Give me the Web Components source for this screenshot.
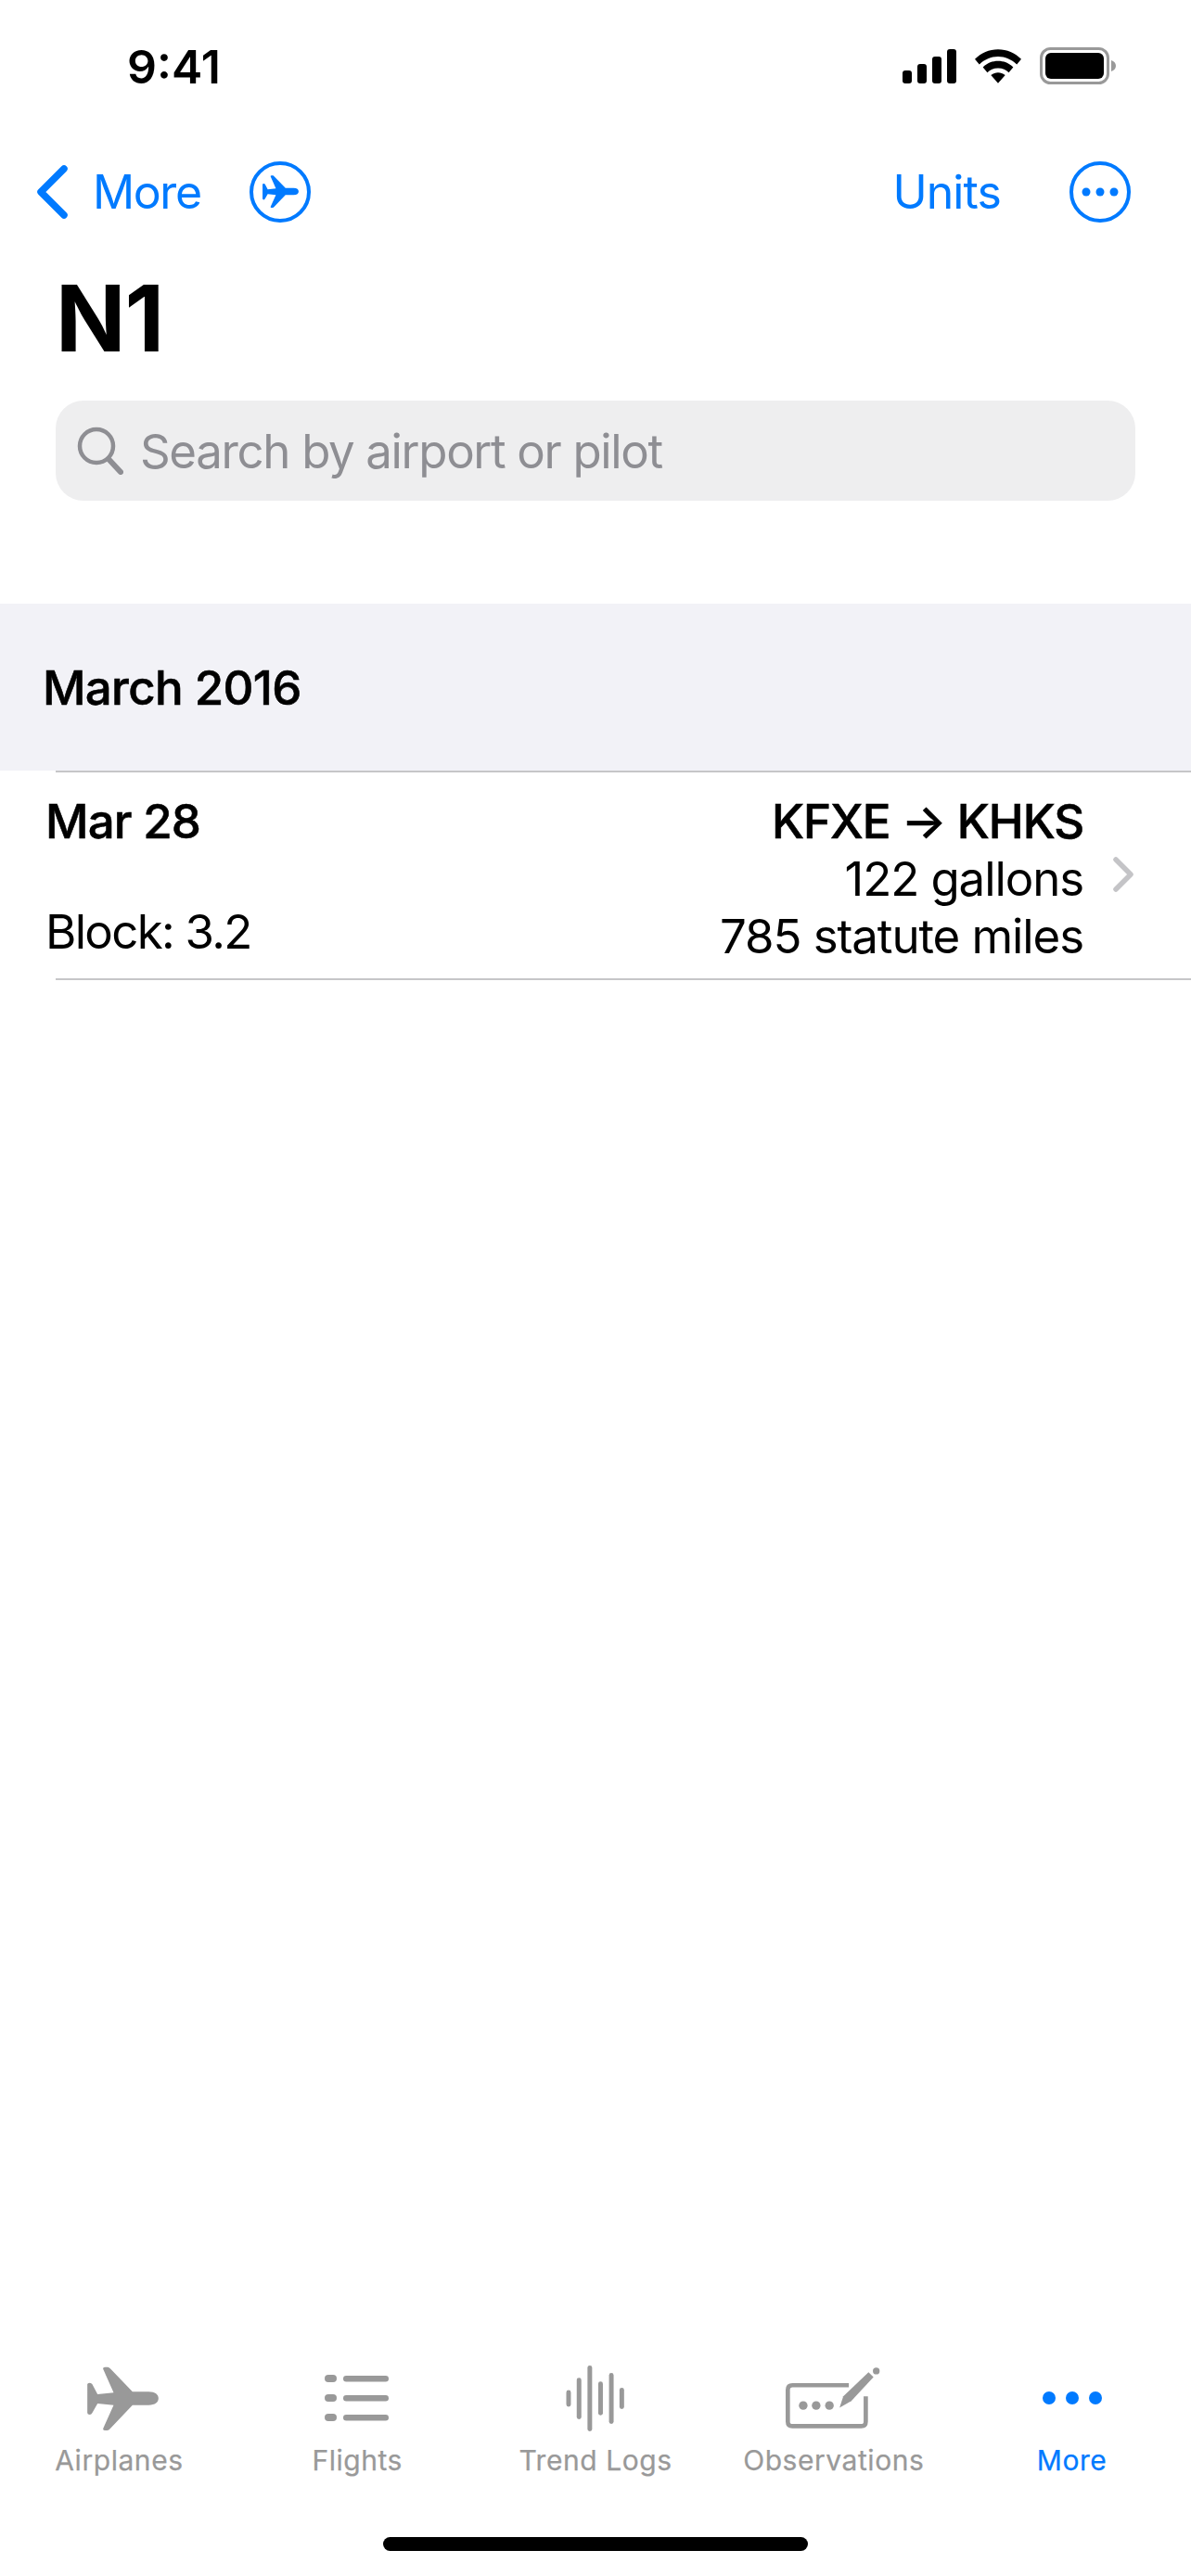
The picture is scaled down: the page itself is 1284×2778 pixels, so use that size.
<!DOCTYPE html>
<html>
<head>
<meta charset="utf-8">
<title>N1</title>
<style>
  html, body { margin: 0; padding: 0; background: #fff; }
  body { font-family: Inter, "Liberation Sans", sans-serif; color: #000; }
</style>
</head>
<body>
<flights-screen>
  <status-bar slot="status" time="9:41"></status-bar>
  <nav-bar slot="nav" back="More" action="Units"></nav-bar>
  <large-title slot="title">N1</large-title>
  <search-field slot="search" placeholder="Search by airport or pilot"></search-field>
  <section-header slot="list">March 2016</section-header>
  <flight-row slot="list" date="Mar 28" block="Block: 3.2" route="KFXE → KHKS" fuel="122 gallons" distance="785 statute miles"></flight-row>
  <tab-bar slot="tabs">
    <tab-item icon="plane" label="Airplanes"></tab-item>
    <tab-item icon="list" label="Flights"></tab-item>
    <tab-item icon="wave" label="Trend Logs"></tab-item>
    <tab-item icon="note" label="Observations"></tab-item>
    <tab-item icon="dots" label="More" active></tab-item>
  </tab-bar>
</flights-screen>

<script>
const BLUE = '#007aff';
const PLANE = 'M42 88 Q42 83 50 83 Q55 83 58 88 L75 120 L127 115 L93 38 Q92 32 100 32 L108 32 Q112 32 116 37 L188 112 L240 112 C262 112 272 122 272 133 C272 146 262 155 240 155 L188 155 L116 231 Q112 237 106 237 L98 237 Q92 237 93 231 L127 155 L75 150 L58 180 Q55 186 50 186 Q42 186 42 180 Z';

class FlightsScreen extends HTMLElement {
  constructor() {
    super();
    this.attachShadow({mode: 'open'}).innerHTML = `
      <style>
        :host { display: flex; flex-direction: column; width: 1284px; height: 2778px; overflow: hidden; background: #fff; }
        .list { display: block; margin-top: 111px; flex: 1; }
      </style>
      <slot name="status"></slot>
      <slot name="nav"></slot>
      <slot name="title"></slot>
      <slot name="search"></slot>
      <div class="list"><slot name="list"></slot></div>
      <slot name="tabs"></slot>
    `;
  }
}

class StatusBar extends HTMLElement {
  constructor() {
    super();
    const time = this.getAttribute('time');
    this.attachShadow({mode: 'open'}).innerHTML = `
      <style>
        :host { display: flex; justify-content: space-between; align-items: center; height: 142px; padding: 0 81px 0 137px; box-sizing: border-box; }
        .time { font: 600 50px/1 Inter, sans-serif; margin-top: 1px; }
        .icons { display: flex; align-items: center; gap: 20px; }
        svg { display: block; }
      </style>
      <span class="time">${time}</span>
      <div class="icons">
        <svg width="58" height="37" viewBox="0 0 58 37">
          <rect x="0" y="23" width="10" height="14" rx="3"/>
          <rect x="16" y="16" width="10" height="21" rx="3"/>
          <rect x="32" y="8" width="10" height="29" rx="3"/>
          <rect x="48" y="0" width="10" height="37" rx="3"/>
        </svg>
        <svg width="50" height="37" viewBox="0 0 52 38">
          <path d="M26 0C36 0 45 4 52 11L47 17C41 11 34 8 26 8C18 8 11 11 5 17L0 11C7 4 16 0 26 0Z"/>
          <path d="M26 13C32 13 38 15 43 20L38 26C35 23 31 21 26 21C21 21 17 23 14 26L9 20C14 15 20 13 26 13Z"/>
          <path d="M26 26C29 26 31 27 34 29L26 38L18 29C21 27 23 26 26 26Z"/>
        </svg>
        <svg width="82" height="40" viewBox="0 0 82 40">
          <rect x="1.5" y="1.5" width="72" height="37" rx="10" fill="none" stroke="#999" stroke-width="3"/>
          <rect x="6" y="6" width="63" height="28" rx="6"/>
          <path d="M77 14C80 15 82 17 82 20C82 23 80 25 77 26Z" fill="#999"/>
        </svg>
      </div>
    `;
  }
}

class NavBar extends HTMLElement {
  constructor() {
    super();
    const back = this.getAttribute('back');
    const action = this.getAttribute('action');
    this.attachShadow({mode: 'open'}).innerHTML = `
      <style>
        :host { display: flex; align-items: center; height: 130px; padding: 0 65px 0 40px; box-sizing: border-box; color: ${BLUE}; font: 400 50px/1 "Inter", sans-serif; letter-spacing: -1.4px; }
        .back { display: flex; align-items: center; gap: 27px; }
        .plane { margin-left: 52px; }
        .spacer { flex: 1; }
        .action { margin-right: 74px; letter-spacing: -.9px; }
        svg { display: block; }
      </style>
      <div class="back">
        <svg width="33" height="58" viewBox="0 0 33 58"><path d="M29 4L4 29L29 54" fill="none" stroke="${BLUE}" stroke-width="7.5" stroke-linecap="round" stroke-linejoin="round"/></svg>
        <span>${back}</span>
      </div>
      <svg class="plane" width="66" height="66" viewBox="0 0 66 66">
        <circle cx="33" cy="33" r="31" fill="none" stroke="${BLUE}" stroke-width="4"/>
        <svg x="14" y="15" width="39" height="35" viewBox="42 30 230 207"><path d="${PLANE}" fill="${BLUE}"/></svg>
      </svg>
      <div class="spacer"></div>
      <span class="action">${action}</span>
      <svg width="66" height="66" viewBox="0 0 66 66">
        <circle cx="33" cy="33" r="31" fill="none" stroke="${BLUE}" stroke-width="4"/>
        <circle cx="18" cy="33" r="4.5" fill="${BLUE}"/><circle cx="33" cy="33" r="4.5" fill="${BLUE}"/><circle cx="48" cy="33" r="4.5" fill="${BLUE}"/>
      </svg>
    `;
  }
}

class LargeTitle extends HTMLElement {
  constructor() {
    super();
    this.attachShadow({mode: 'open'}).innerHTML = `
      <style>
        :host { display: block; height: 160px; padding: 0 60px; box-sizing: border-box; font: 700 99px/142px Inter, sans-serif; letter-spacing: -1px; }
      </style>
      <slot></slot>
    `;
  }
}

class SearchField extends HTMLElement {
  constructor() {
    super();
    const placeholder = this.getAttribute('placeholder');
    this.attachShadow({mode: 'open'}).innerHTML = `
      <style>
        :host { display: flex; align-items: center; gap: 18px; height: 108px; margin: 0 60px; padding: 0 23px; box-sizing: border-box; background: #eeeeef; border-radius: 30px; color: #8e8e93; font: 400 51px/1 Inter, sans-serif; letter-spacing: -1.35px; }
        svg { display: block; flex: none; }
      </style>
      <svg width="50" height="52" viewBox="0 0 50 52"><circle cx="21" cy="21" r="18" fill="none" stroke="#8e8e93" stroke-width="4.5"/><path d="M34 35L47 49" stroke="#8e8e93" stroke-width="6" stroke-linecap="round"/></svg>
      <span>${placeholder}</span>
    `;
  }
}

class SectionHeader extends HTMLElement {
  constructor() {
    super();
    this.attachShadow({mode: 'open'}).innerHTML = `
      <style>
        :host { display: flex; align-items: center; height: 180px; padding-left: 46px; box-sizing: border-box; background: #f2f2f7; font: 500 51px/1 Inter, sans-serif; letter-spacing: -.7px; -webkit-text-stroke: .6px #000; }
      </style>
      <slot></slot>
    `;
  }
}

class FlightRow extends HTMLElement {
  constructor() {
    super();
    const a = n => this.getAttribute(n);
    this.attachShadow({mode: 'open'}).innerHTML = `
      <style>
        :host { display: block; position: relative; font: 400 51px/62px Inter, sans-serif; letter-spacing: -1.1px; }
        .row { display: flex; justify-content: space-between; height: 222px; padding: 22px 116px 0 49px; box-sizing: border-box; }
        .left { display: flex; flex-direction: column; justify-content: space-between; height: 181px; }
        .block { letter-spacing: -1.7px; }
        .right { display: flex; flex-direction: column; text-align: right; }
        b { font-weight: 500; -webkit-text-stroke: .6px #000; letter-spacing: -.9px; }
        .right b { letter-spacing: -1.1px; }
        .rule { height: 2px; background: #c6c6c8; margin-left: 60px; }
        .chev { position: absolute; right: 62px; top: 93px; }
      </style>
      <div class="rule"></div>
      <div class="row">
        <div class="left"><b>${a('date')}</b><span class="block">${a('block')}</span></div>
        <div class="right"><b>${a('route')}</b><span>${a('fuel')}</span><span>${a('distance')}</span></div>
      </div>
      <div class="rule"></div>
      <svg class="chev" width="22" height="38" viewBox="0 0 22 38"><path d="M3 3L19 19L3 35" fill="none" stroke="#c4c4c7" stroke-width="5.5" stroke-linecap="round" stroke-linejoin="round"/></svg>
    `;
  }
}

class TabBar extends HTMLElement {
  constructor() {
    super();
    this.attachShadow({mode: 'open'}).innerHTML = `
      <style>
        :host { display: block; height: 238px; padding-top: 9px; box-sizing: border-box; }
        .items { display: grid; grid-template-columns: repeat(5, 1fr); }
        .home { width: 458px; height: 15px; margin: 65px auto 0; background: #000; border-radius: 8px; }
      </style>
      <div class="items"><slot></slot></div>
      <div class="home"></div>
    `;
  }
}

const TAB_ICONS = {
  plane: c => `<svg style="margin-left: 8px" width="77" height="69" viewBox="42 30 230 207"><path d="${PLANE}" fill="${c}"/></svg>`,
  list: c => `<svg width="70" height="50" viewBox="0 0 70 50" fill="${c}">
      <rect x="0" y="0" width="13" height="8" rx="4"/><rect x="20" y="1" width="49" height="6.5" rx="3.25"/>
      <rect x="0" y="21" width="13" height="8" rx="4"/><rect x="20" y="22" width="49" height="6.5" rx="3.25"/>
      <rect x="0" y="42" width="13" height="8" rx="4"/><rect x="20" y="43" width="49" height="6.5" rx="3.25"/></svg>`,
  wave: c => `<svg width="63" height="73" viewBox="28 26 190 218" fill="${c}">
      <rect x="29.5" y="108" width="15" height="54" rx="7.5"/><rect x="63.5" y="68" width="15" height="135" rx="7.5"/>
      <rect x="98.5" y="28" width="15" height="214" rx="7.5"/><rect x="133.5" y="80" width="15" height="110" rx="7.5"/>
      <rect x="168.5" y="52" width="15" height="166" rx="7.5"/><rect x="202.5" y="100" width="15" height="70" rx="7.5"/></svg>`,
  note: c => `<svg style="margin-right: 2px" width="102" height="67" viewBox="33 35 307 200">
      <path d="M238 92H55Q40 92 40 107V210Q40 225 55 225H278Q293 225 293 210V128" fill="none" stroke="${c}" stroke-width="14"/>
      <circle cx="90" cy="158" r="14" fill="${c}"/><circle cx="132" cy="158" r="14" fill="${c}"/><circle cx="175" cy="158" r="14" fill="${c}"/>
      <path d="M208 165L220 128L302 50L318 66L246 143Z" fill="${c}"/><circle cx="327" cy="46" r="11" fill="${c}"/></svg>`,
  dots: c => `<svg width="64" height="74" viewBox="0 0 64 74" fill="${c}"><circle cx="7" cy="37" r="7"/><circle cx="32" cy="37" r="7"/><circle cx="57" cy="37" r="7"/></svg>`
};

class TabItem extends HTMLElement {
  constructor() {
    super();
    const color = this.hasAttribute('active') ? BLUE : '#999999';
    const icon = TAB_ICONS[this.getAttribute('icon')](color);
    this.attachShadow({mode: 'open'}).innerHTML = `
      <style>
        :host { display: flex; flex-direction: column; align-items: center; color: ${color}; font: 400 30px/36px Inter, sans-serif; letter-spacing: .55px; -webkit-text-stroke: .25px ${color}; }
        .icon { height: 74px; display: flex; align-items: center; margin-bottom: 12px; }
        svg { display: block; }
      </style>
      <div class="icon">${icon}</div>
      <span>${this.getAttribute('label')}</span>
    `;
  }
}

customElements.define('flights-screen', FlightsScreen);
customElements.define('status-bar', StatusBar);
customElements.define('nav-bar', NavBar);
customElements.define('large-title', LargeTitle);
customElements.define('search-field', SearchField);
customElements.define('section-header', SectionHeader);
customElements.define('flight-row', FlightRow);
customElements.define('tab-bar', TabBar);
customElements.define('tab-item', TabItem);
</script>
</body>
</html>
